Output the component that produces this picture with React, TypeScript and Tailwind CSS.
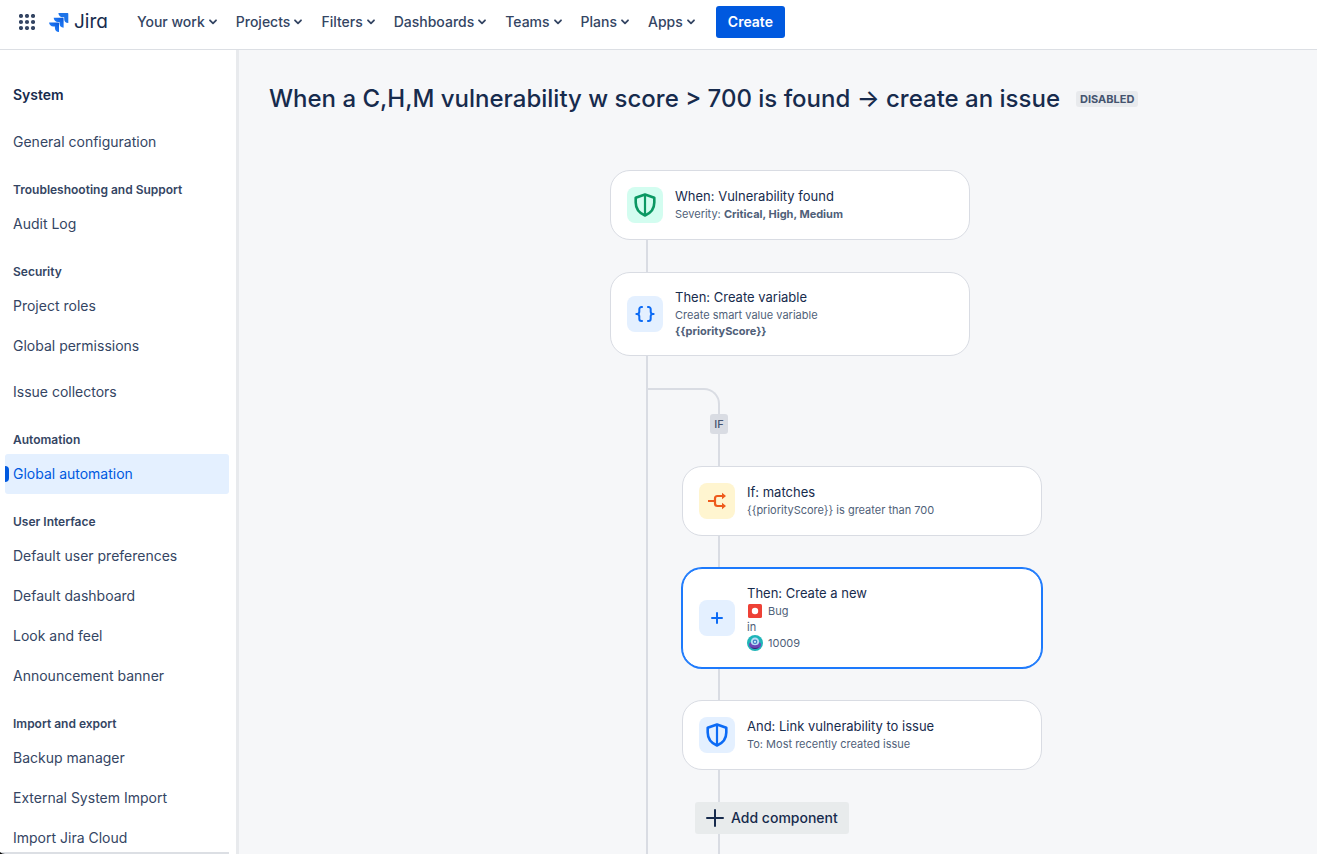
import type { ReactNode } from "react";
import { clsx } from "clsx";

const navItems = ["Your work", "Projects", "Filters", "Dashboards", "Teams", "Plans", "Apps"];

type Section = { heading?: string; groups: string[][] };

const sections: Section[] = [
  { groups: [["General configuration"]] },
  { heading: "Troubleshooting and Support", groups: [["Audit Log"]] },
  { heading: "Security", groups: [["Project roles", "Global permissions"], ["Issue collectors"]] },
  { heading: "Automation", groups: [["Global automation"]] },
  {
    heading: "User Interface",
    groups: [["Default user preferences", "Default dashboard", "Look and feel", "Announcement banner"]],
  },
  { heading: "Import and export", groups: [["Backup manager", "External System Import", "Import Jira Cloud"]] },
];

const activeItem = "Global automation";

function AppSwitcherIcon() {
  const steps = [2, 8, 14];
  return (
    <svg width="16" height="16" viewBox="0 0 16 16" fill="#344563" aria-hidden="true">
      {steps.map((y) => steps.map((x) => <circle key={`${x}-${y}`} cx={x} cy={y} r="2.1" />))}
    </svg>
  );
}

function JiraMark() {
  return (
    <svg width="20" height="20" viewBox="0 0 20 20" aria-hidden="true">
      <defs>
        <linearGradient id="jira-a" x1="1" y1="0" x2="0.3" y2="0.8">
          <stop offset="0.1" stopColor="#0c5bdc" />
          <stop offset="1" stopColor="#2684ff" />
        </linearGradient>
      </defs>
      <path d="M18.600 1H9.400a4.200 4.200 0 0 0 4.200 4.200h1.600v1.700a4.200 4.200 0 0 0 4.100 4.100V1.700a.7.7 0 0 0-.7-.7z" fill="#1d74e8" />
      <path d="M13.900 5.700H4.700a4.200 4.200 0 0 0 4.200 4.200h1.600v1.700a4.200 4.200 0 0 0 4.100 4.100V6.400a.7.7 0 0 0-.7-.7z" fill="url(#jira-a)" />
      <path d="M9.300 10.400H.1a4.200 4.200 0 0 0 4.200 4.200h1.600v1.500A4.200 4.200 0 0 0 10 20v-8.900a.7.7 0 0 0-.7-.7z" fill="url(#jira-a)" />
    </svg>
  );
}

function Chevron() {
  return (
    <svg width="8" height="6" viewBox="0 0 8 6" fill="none" stroke="#344563" strokeWidth="1.8" strokeLinecap="round" strokeLinejoin="round" aria-hidden="true">
      <path d="M1 1.3 4 4.3 7 1.3" />
    </svg>
  );
}

function ShieldIcon() {
  return (
    <svg width="24" height="24" viewBox="0 0 24 24" fill="none" stroke="currentColor" strokeWidth="2.6" strokeLinejoin="round" aria-hidden="true">
      <path d="M12 1.500 2.700 4.800V9.500c0 6.200 3.600 10.600 9.300 13 5.700-2.400 9.300-6.800 9.300-13V4.800z" />
      <path d="M12 1.500v21" strokeWidth="2.200" />
    </svg>
  );
}

function BracesIcon() {
  return (
    <svg width="20" height="18" viewBox="0 0 20 18" fill="none" stroke="currentColor" strokeWidth="2" aria-hidden="true">
      <path d="M7.800 2H6.500A2.200 2.200 0 0 0 4.300 4.200v2.300C4.300 8 3.500 9 2 9H.6H2c1.500 0 2.300 1 2.300 2.500v2.300A2.200 2.200 0 0 0 6.500 16h1.300" />
      <path d="M12.200 2h1.300a2.200 2.200 0 0 1 2.200 2.200v2.300C15.700 8 16.500 9 18 9h1.400H18c-1.500 0-2.300 1-2.300 2.500v2.300a2.200 2.200 0 0 1-2.200 2.200h-1.300" />
    </svg>
  );
}

function BranchIcon() {
  return (
    <svg width="20" height="18" viewBox="0 0 20 18" fill="none" stroke="currentColor" strokeWidth="2.200" aria-hidden="true">
      <path d="M1 9h7M16 4h-5.500A2.500 2.500 0 0 0 8 6.500v5a2.500 2.500 0 0 0 2.500 2.500H16" />
      <path d="M15 .8 19 4l-4 3.200zM15 10.800 19 14l-4 3.200z" fill="currentColor" stroke="none" />
    </svg>
  );
}

function PlusIcon({ size, stroke }: { size: number; stroke: number }) {
  return (
    <svg width={size} height={size} viewBox={`0 0 ${size} ${size}`} stroke="currentColor" strokeWidth={stroke} strokeLinecap="round" aria-hidden="true">
      <path d={`M${size / 2} 1v${size - 2}M1 ${size / 2}h${size - 2}`} />
    </svg>
  );
}

function BugIcon() {
  return (
    <svg width="16" height="16" viewBox="0 0 16 16" aria-hidden="true">
      <rect x="1" y="1" width="14" height="14" rx="1.500" fill="#ee4136" />
      <circle cx="8" cy="8" r="3.200" fill="#fff" />
    </svg>
  );
}

function ProjectAvatar() {
  return (
    <svg width="16" height="16" viewBox="0 0 16 16" aria-hidden="true">
      <circle cx="8" cy="8" r="8" fill="#1fb5b8" />
      <path d="M2 9.500c0-2 2-3 6-3s6 1 6 3-1.500 4.500-6 4.500-6-2.500-6-4.500z" fill="#6b45b8" />
      <path d="M4 12.300c2.500 1 5.500 1 8 0-1 1.200-2.500 1.700-4 1.700s-3-.5-4-1.700z" fill="#2c2a70" />
      <path d="M3.800 7a4.200 4.500 0 0 1 8.400 0c0 2-1.700 3.300-4.200 3.300S3.800 9 3.800 7z" fill="#b9dcf5" />
      <circle cx="8" cy="6.800" r="2.300" fill="#3f7fc4" />
      <circle cx="8" cy="6.800" r="1.100" fill="#d9eefb" />
    </svg>
  );
}

function Connector({ grow = false }: { grow?: boolean }) {
  return <div className={clsx("ml-9 w-0.5 bg-[#d9dce3]", grow ? "flex-1" : "h-8 shrink-0")} />;
}

const tones = {
  green: "bg-[#d3fdf0] text-[#0b9863]",
  blue: "bg-[#e4f0ff] text-[#0c6bf5]",
  yellow: "bg-[#fff5d0] text-[#ee5a1c]",
};

type CardProps = {
  icon: ReactNode;
  tone: keyof typeof tones;
  title: string;
  selected?: boolean;
  children: ReactNode;
};

function RuleCard({ icon, tone, title, selected = false, children }: CardProps) {
  return (
    <button
      type="button"
      className={clsx(
        "relative z-10 flex w-[360px] shrink-0 items-center gap-3 rounded-[20px] border bg-white p-4 text-left",
        selected ? "border-[#1d7afc] ring-1 ring-[#1d7afc]" : "border-[#d9dce3]",
      )}
    >
      <span className={clsx("flex size-9 shrink-0 items-center justify-center rounded-lg", tones[tone])}>{icon}</span>
      <span className="flex flex-col text-[11px] leading-4 text-[#505f79]">
        <span className="pb-0.5 text-[13px] leading-4 text-[#172b4d]">{title}</span>
        {children}
      </span>
    </button>
  );
}

function Header() {
  return (
    <header className="flex shrink-0 items-center border-b border-[#dcdfe4] pt-1.5 pb-[11px] pl-[19px]">
      <button type="button" aria-label="Switch apps">
        <AppSwitcherIcon />
      </button>
      <a href="#home" className="ml-3.5 flex items-center gap-[5px] text-[19px] leading-8 text-[#172b4d] [font-feature-settings:'cv11']">
        <JiraMark />
        Jira
      </a>
      <nav className="ml-[29px] flex items-center gap-[19px]">
        {navItems.map((item) => (
          <button key={item} type="button" className="flex items-center gap-1 text-sm font-medium text-[#344563]">
            {item}
            <Chevron />
          </button>
        ))}
      </nav>
      <button type="button" className="ml-[21px] h-8 rounded-[3px] bg-[#0059df] px-3 text-sm font-semibold text-white">
        Create
      </button>
    </header>
  );
}

function SidebarLink({ label }: { label: string }) {
  const active = label === activeItem;
  return (
    <a
      href={`#${label.toLowerCase().replaceAll(" ", "-")}`}
      aria-current={active ? "page" : undefined}
      className={clsx("flex h-10 items-center rounded-[3px] text-sm", active ? "bg-[#e4f0ff] text-[#0059df]" : "text-[#344563]")}
    >
      <span className={clsx("mr-1 h-4 w-1 rounded-r-sm", active && "bg-[#0059df]")} />
      {label}
    </a>
  );
}

function Sidebar() {
  return (
    <aside className="flex w-[239px] shrink-0 flex-col border-r-[3px] border-[#e8eaed]">
      <nav className="min-h-0 flex-1 overflow-hidden pr-[7px] pl-[5px]">
        <h2 className="pt-[35px] pb-[17px] pl-2 text-sm font-semibold text-[#172b4d]">System</h2>
        {sections.map((section) => (
          <section key={section.groups[0][0]}>
            {section.heading && (
              <h3 className="pt-5 pb-1.5 pl-2 text-xs leading-4 font-semibold text-[#344563]">{section.heading}</h3>
            )}
            <div className="flex flex-col gap-1.5">
              {section.groups.map((group) => (
                <div key={group[0]}>
                  {group.map((label) => (
                    <SidebarLink key={label} label={label} />
                  ))}
                </div>
              ))}
            </div>
          </section>
        ))}
      </nav>
      <div className="mr-[7px] flex h-0.5 bg-[#dcdfe4]">
        <svg width="5" height="2" viewBox="0 0 5 2" aria-hidden="true">
          <path d="M0 0c1 1.200 3 2 5 2H0z" fill="#000" />
        </svg>
      </div>
    </aside>
  );
}

export default function App() {
  return (
    <div className="flex h-screen flex-col overflow-hidden bg-white font-['Inter',sans-serif]">
      <Header />
      <div className="flex min-h-0 flex-1">
        <Sidebar />
        <main className="flex min-w-0 flex-1 flex-col overflow-hidden bg-[#f6f7f9] pl-6">
          <div className="flex items-center gap-4 pt-8 pb-[54px] pl-1.5">
            <h1 className="text-[24px] leading-[34px] font-medium whitespace-nowrap text-[#172b4d]">
              When a C,H,M vulnerability w score &gt; 700 is found → create an issue
            </h1>
            <span className="rounded-[3px] bg-[#e8eaed] px-1 text-[11px] leading-4 font-bold text-[#44546f]">DISABLED</span>
          </div>
          <div className="flex min-h-0 w-[360px] flex-1 flex-col self-center">
            <RuleCard icon={<ShieldIcon />} tone="green" title="When: Vulnerability found">
              <span>
                Severity: <b>Critical, High, Medium</b>
              </span>
            </RuleCard>
            <Connector />
            <RuleCard icon={<BracesIcon />} tone="blue" title="Then: Create variable">
              <span>Create smart value variable</span>
              <b>{"{{priorityScore}}"}</b>
            </RuleCard>
            <div className="ml-9 flex min-h-0 flex-1 flex-col border-l-2 border-[#d9dce3] pt-8">
              <div className="h-[26px] w-[72px] shrink-0 rounded-tr-2xl border-t-2 border-r-2 border-[#d9dce3]" />
              <div className="flex min-h-0 flex-1 flex-col items-start pl-[34px]">
                <span className="ml-7 w-[18px] shrink-0 rounded-[3px] bg-[#d9dce3] text-center text-[11px] leading-5 font-medium text-[#44546f]">
                  IF
                </span>
                <Connector />
                <RuleCard icon={<BranchIcon />} tone="yellow" title="If: matches">
                  <span>{"{{priorityScore}} is greater than 700"}</span>
                </RuleCard>
                <Connector />
                <RuleCard icon={<PlusIcon size={12} stroke={2} />} tone="blue" title="Then: Create a new" selected>
                  <span className="flex items-center gap-[5px]">
                    <BugIcon />
                    Bug
                  </span>
                  <span>in</span>
                  <span className="flex items-center gap-[5px]">
                    <ProjectAvatar />
                    10009
                  </span>
                </RuleCard>
                <Connector />
                <RuleCard icon={<ShieldIcon />} tone="blue" title="And: Link vulnerability to issue">
                  <span>To: Most recently created issue</span>
                </RuleCard>
                <Connector />
                <button
                  type="button"
                  className="ml-[13px] flex h-8 shrink-0 items-center gap-[7px] rounded-[3px] bg-[#e8ebec] px-[11px] text-sm font-medium text-[#172b4d]"
                >
                  <PlusIcon size={18} stroke={2} />
                  Add component
                </button>
                <Connector grow />
              </div>
            </div>
          </div>
        </main>
      </div>
    </div>
  );
}
